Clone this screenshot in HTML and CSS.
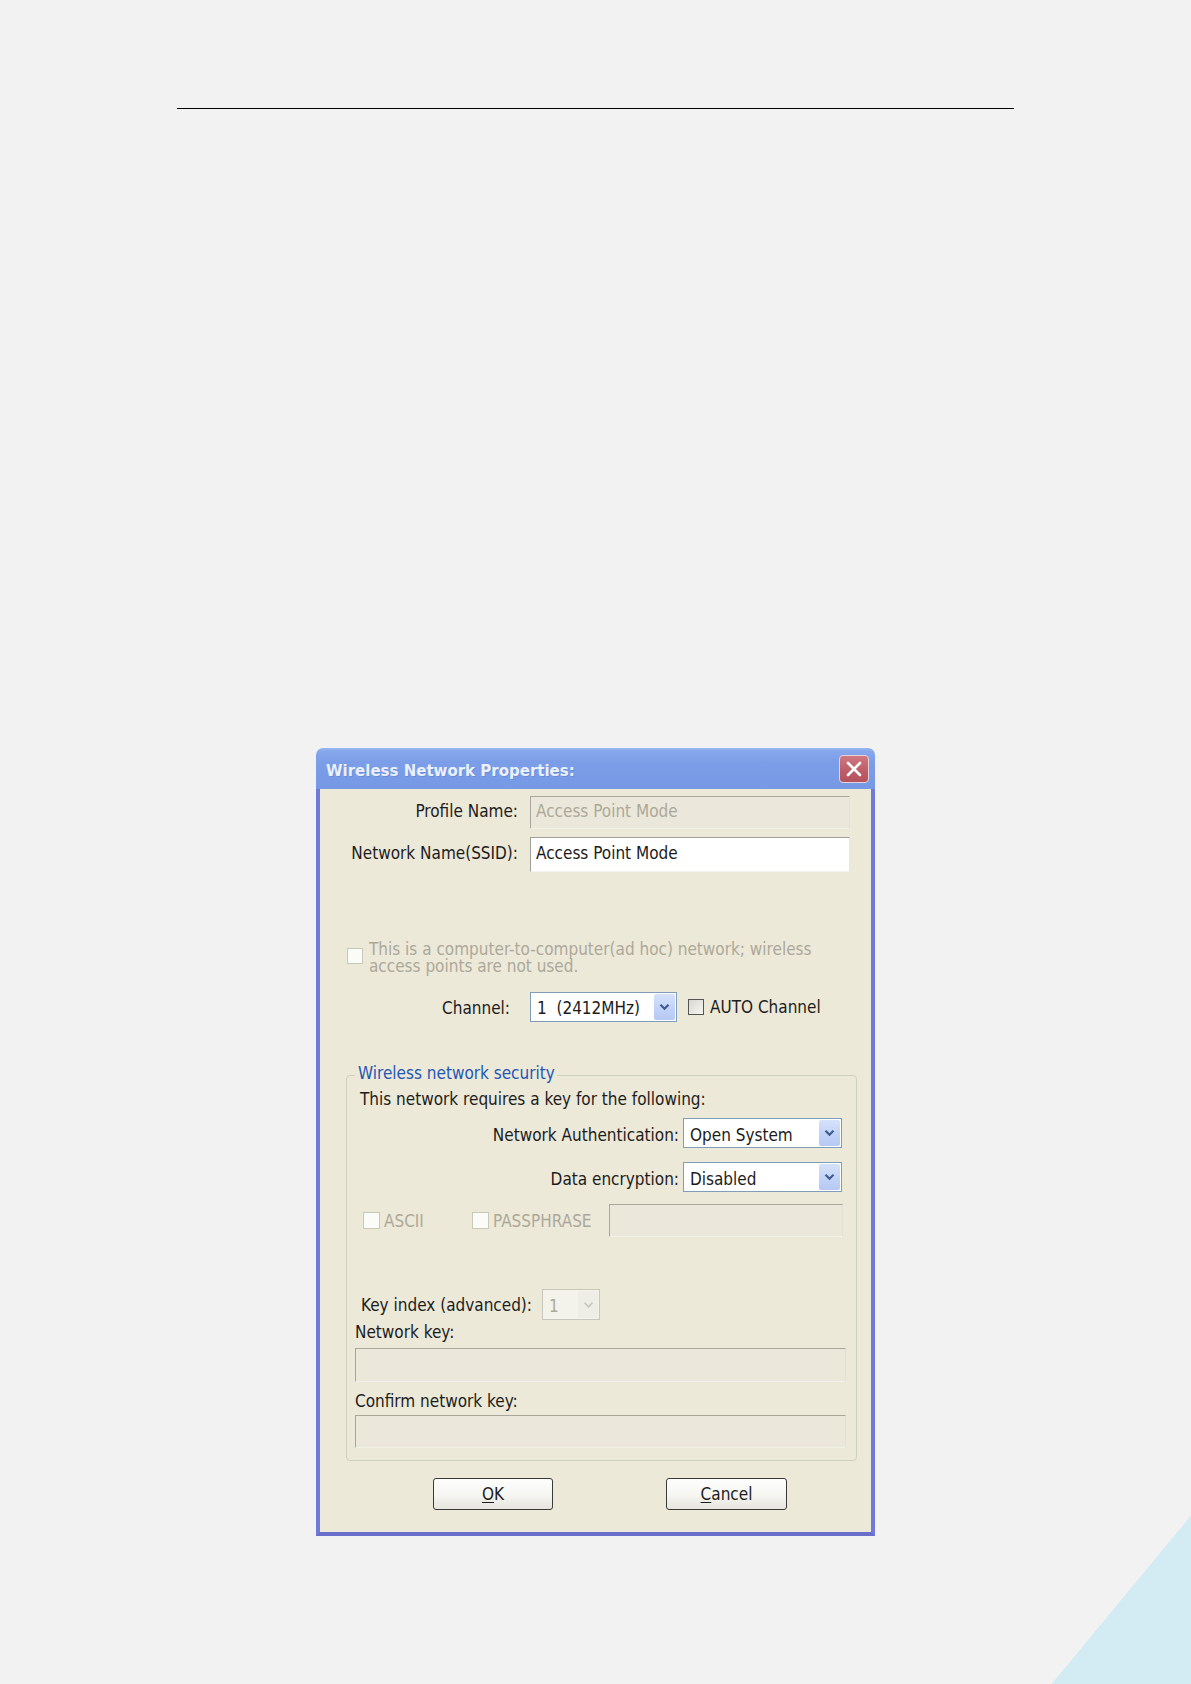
FILE: index.html
```html
<!DOCTYPE html>
<html>
<head>
<meta charset="utf-8">
<title>Wireless Network Properties</title>
<link rel="stylesheet" href="styles.css">
</head>
<body>
<div class="page">
  <div class="rule"></div>

  <div class="dialog">
    <div class="titlebar">
      <div class="title">Wireless Network Properties:</div>
      <div class="close">
        <svg width="18" height="16" viewBox="0 0 18 16"><path d="M3 2 L15 14 M15 2 L3 14" stroke="#fff" stroke-width="2.6" stroke-linecap="round"/></svg>
      </div>
    </div>

    <div class="body">
      <div class="row r-profile">
        <div class="lbl">Profile Name:</div>
        <div class="field disabled h33">Access Point Mode</div>
      </div>
      <div class="row r-ssid">
        <div class="lbl">Network Name(SSID):</div>
        <div class="field enabled h35">Access Point Mode</div>
      </div>

      <div class="adhoc">
        <div class="cb cb-disabled cb-adhoc"></div>
        <div class="adhoc-text">This is a computer-to-computer(ad hoc) network; wireless<br>access points are not used.</div>
      </div>

      <div class="row r-channel">
        <div class="lbl lbl-channel">Channel:</div>
        <div class="chan-ctrls">
          <div class="sel sel-channel">
            <div class="val">1  (2412MHz)</div>
            <div class="btn"><svg width="11" height="8" viewBox="0 0 11 8"><path d="M1.5 1.8 L5.5 5.8 L9.5 1.8" fill="none" stroke="#3f5b92" stroke-width="2.2"/></svg></div>
          </div>
          <div class="cb cb-auto"></div>
          <div class="auto-text">AUTO Channel</div>
        </div>
      </div>

      <fieldset class="group">
        <legend>Wireless network security</legend>
        <div class="intro">This network requires a key for the following:</div>

        <div class="grow g-auth">
          <div class="lbl">Network Authentication:</div>
          <div class="sel sel-wide">
            <div class="val">Open System</div>
            <div class="btn"><svg width="11" height="8" viewBox="0 0 11 8"><path d="M1.5 1.8 L5.5 5.8 L9.5 1.8" fill="none" stroke="#3f5b92" stroke-width="2.2"/></svg></div>
          </div>
        </div>
        <div class="grow g-enc">
          <div class="lbl">Data encryption:</div>
          <div class="sel sel-wide">
            <div class="val">Disabled</div>
            <div class="btn"><svg width="11" height="8" viewBox="0 0 11 8"><path d="M1.5 1.8 L5.5 5.8 L9.5 1.8" fill="none" stroke="#3f5b92" stroke-width="2.2"/></svg></div>
          </div>
        </div>

        <div class="ascii-row">
          <div class="opt opt-ascii"><div class="cb cb-disabled"></div><span class="dis">ASCII</span></div>
          <div class="opt opt-pass"><div class="cb cb-disabled"></div><span class="dis">PASSPHRASE</span></div>
          <div class="field disabled pass-field"></div>
        </div>

        <div class="keyidx">
          <div class="lbl-keyidx">Key index (advanced):</div>
          <div class="sel sel-dis">
            <div class="val">1</div>
            <div class="btn"><svg width="11" height="8" viewBox="0 0 11 8"><path d="M1.5 1.8 L5.5 5.8 L9.5 1.8" fill="none" stroke="#c6c5be" stroke-width="1.6"/></svg></div>
          </div>
        </div>

        <div class="klabel kl-1">Network key:</div>
        <div class="field disabled kfield kf-1"></div>
        <div class="klabel kl-2">Confirm network key:</div>
        <div class="field disabled kfield kf-2"></div>
      </fieldset>

      <div class="buttons">
        <div class="button"><span class="ak">O</span>K</div>
        <div class="button btn-cancel"><span class="ak">C</span>ancel</div>
      </div>
    </div>
  </div>
</div>
</body>
</html>
```

FILE: styles.css
```css
html, body {
  margin: 0;
  padding: 0;
  background: #f2f2f2;
}

.page {
  width: 1191px;
  height: 1684px;
  overflow: hidden;
  background:
    linear-gradient(to bottom right, rgba(211,235,243,0) calc(50% - 0.6px), #d3ebf3 50%) right bottom / 139px 168px no-repeat,
    #f2f2f2;
  display: flex;
  flex-direction: column;
}

.rule {
  margin-top: 108px;
  margin-left: 177px;
  width: 837px;
  height: 1px;
  background: #000;
}

.dialog {
  margin-top: 639px;
  margin-left: 316px;
  width: 559px;
  font-family: "DejaVu Sans Condensed", "Liberation Sans", sans-serif;
  font-size: 17px;
  line-height: 18px;
  color: #1c1c1c;
}

.titlebar {
  height: 41px;
  box-sizing: border-box;
  border-radius: 7px 7px 0 0;
  background: linear-gradient(#9ab8f2 0px, #86a7ed 3px, #7c9ee8 14px, #7699e6 100%);
  display: flex;
  align-items: flex-start;
  justify-content: space-between;
  padding: 0 6px 0 10px;
}

.title {
  margin-top: 14px;
  font-family: "DejaVu Sans", sans-serif;
  font-weight: bold;
  font-size: 15px;
  line-height: 18px;
  color: #eaf0fc;
  text-shadow: 1px 1px 0 rgba(70, 100, 180, 0.3);
}

.close {
  margin-top: 7px;
  width: 30px;
  height: 28px;
  box-sizing: border-box;
  border: 1px solid #e9d3d8;
  border-radius: 4px;
  background: linear-gradient(#cf7880, #bd5b66 60%, #b4525d);
  display: flex;
  align-items: center;
  justify-content: center;
}

.body {
  background: #ece9d9;
  border: 4px solid #6e7bd8;
  border-top: none;
  border-bottom-color: #6a6fcb;
  padding: 7px 0 22px 0;
}

/* top rows */
.row {
  display: grid;
  grid-template-columns: 198px auto;
  column-gap: 12px;
  align-items: baseline;
}

.lbl {
  text-align: right;
  white-space: nowrap;
}

.r-ssid { margin-top: 8px; }

.field {
  box-sizing: border-box;
  width: 320px;
  padding: 5px 5px 0 5px;
  border: 1px solid;
  white-space: nowrap;
}

.field.h33 { height: 33px; }
.field.h35 { height: 35px; padding-top: 6px; }

.field.disabled {
  background: #ebe8db;
  color: #aca899;
  border-color: #a9a79d #e3e1d6 #f1f0ea #a9a79d;
}

.field.enabled {
  background: #fff;
  color: #1c1c1c;
  border-color: #9e9e9a #e6e6e2 #f3f3f0 #9e9e9a;
}

/* ad hoc */
.adhoc {
  margin-top: 69px;
  padding-left: 27px;
  display: flex;
  align-items: flex-start;
  line-height: 17px;
}

.cb {
  box-sizing: border-box;
  width: 16px;
  height: 16px;
  flex: none;
}

.cb-disabled {
  background: #fbfbf8;
  border: 1px solid #cac8bb;
}

.cb-adhoc {
  margin-top: 7px;
  margin-right: 6px;
}

.adhoc-text {
  color: #aca899;
}

/* channel */
.r-channel { margin-top: 17px; }
.lbl-channel { padding-right: 8px; }

.chan-ctrls {
  display: flex;
  align-items: center;
}

.sel {
  box-sizing: border-box;
  height: 30px;
  border: 1px solid #7f9db9;
  background: #fff;
  display: flex;
  padding: 1px;
}

.sel .val {
  flex: 1;
  padding: 5px 0 0 5px;
  white-space: pre;
}

.sel .btn {
  width: 21px;
  flex: none;
  border-radius: 2px;
  background: linear-gradient(#d6e2fb, #c2d3f7 55%, #b6c9f4);
  display: flex;
  align-items: center;
  justify-content: center;
}

.sel-channel { width: 147px; }

.cb-auto {
  width: 16px;
  height: 16px;
  margin-left: 11px;
  border: 1px solid #555;
  background: linear-gradient(135deg, #d8d8d0, #f7f7f3);
}

.auto-text {
  margin-left: 6px;
  white-space: nowrap;
}

/* group */
.group {
  margin: 44px 14px 0 26px;
  padding: 0 10px 12px 8px;
  border: 1px solid #d0d0bf;
  border-radius: 4px;
  min-width: 0;
}

.group legend {
  padding: 0 2px 5px 3px;
  line-height: 14px;
  color: #2457b3;
}

.intro {
  margin-top: 5px;
  padding-left: 5px;
}

.grow {
  display: grid;
  grid-template-columns: 324px 159px;
  column-gap: 4px;
  align-items: baseline;
}

.g-auth { margin-top: 10px; }
.g-enc { margin-top: 14px; }

.sel-wide .val { padding-top: 6px; }

.ascii-row {
  margin-top: 12px;
  padding-left: 8px;
  display: flex;
  align-items: center;
}

.opt {
  display: flex;
  align-items: center;
  flex: none;
}

.opt .cb { width: 17px; height: 17px; margin-right: 4px; }
.opt-ascii { width: 109px; }
.opt-pass { width: 137px; }

.dis { color: #aca899; }

.pass-field {
  width: 234px;
  height: 33px;
}

.keyidx {
  margin-top: 52px;
  padding-left: 6px;
  display: flex;
  align-items: center;
}

.lbl-keyidx { margin-right: 10px; white-space: nowrap; }

.sel-dis {
  width: 58px;
  height: 31px;
  border-color: #c9c7ba;
  background: #f3f2eb;
  color: #aca899;
}

.sel-dis .val { padding-top: 6px; }

.sel-dis .btn {
  background: #eeede6;
  width: 20px;
}

.klabel { white-space: nowrap; }
.kl-1 { margin-top: 3px; }
.kl-2 { margin-top: 10px; }

.kfield { width: 491px; }
.kf-1 { margin-top: 7px; height: 34px; }
.kf-2 { margin-top: 5px; height: 33px; }

/* buttons */
.buttons {
  margin-top: 17px;
  padding-left: 113px;
  display: flex;
  gap: 113px;
}

.button {
  box-sizing: border-box;
  width: 120px;
  height: 32px;
  border: 1px solid #3a3a3a;
  border-radius: 3px;
  background: linear-gradient(#fefefd, #f4f4f0 60%, #e6e5de);
  display: flex;
  align-items: center;
  justify-content: center;
  color: #1c1c1c;
}

.btn-cancel { width: 121px; }

.ak { text-decoration: underline; text-underline-offset: 2px; }
```
